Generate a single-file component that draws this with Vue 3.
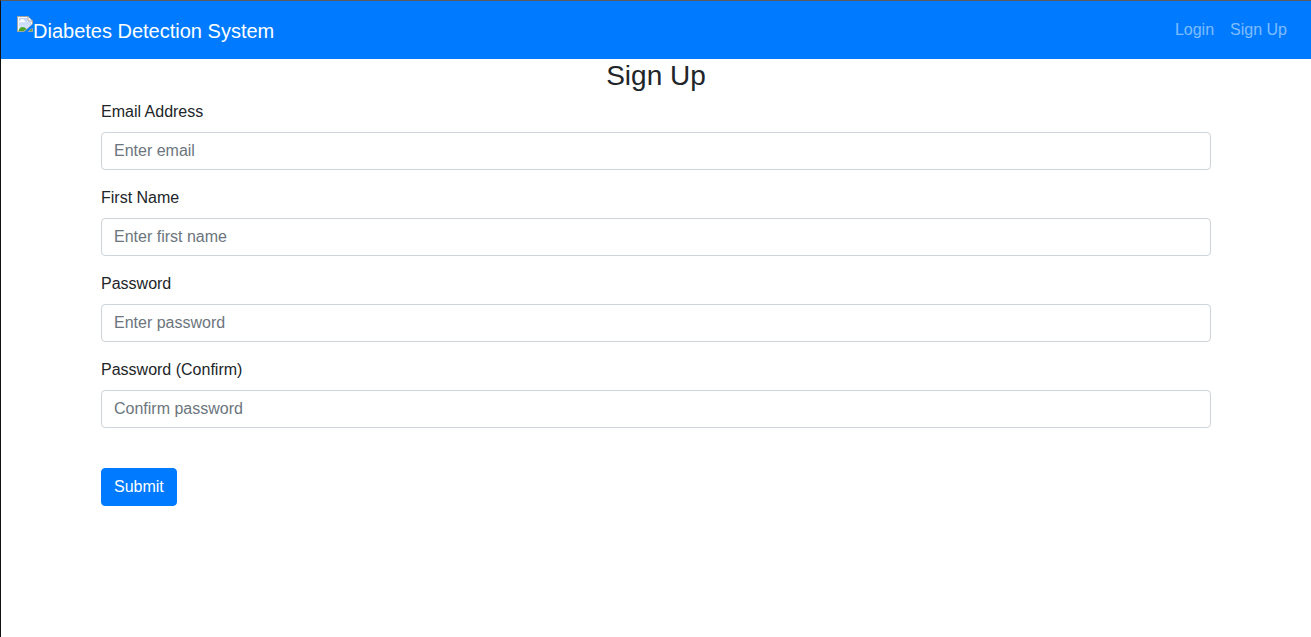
<script setup>
import { reactive } from 'vue'

const fields = [
  { id: 'email', label: 'Email Address', type: 'email', placeholder: 'Enter email' },
  { id: 'firstName', label: 'First Name', type: 'text', placeholder: 'Enter first name' },
  { id: 'password1', label: 'Password', type: 'password', placeholder: 'Enter password' },
  { id: 'password2', label: 'Password (Confirm)', type: 'password', placeholder: 'Confirm password' }
]

const form = reactive({ email: '', firstName: '', password1: '', password2: '' })
</script>

<template>
  <div class="page">
    <nav class="navbar">
      <a class="brand" href="#">
        <svg class="brand-icon" width="16" height="16" viewBox="0 0 16 16" aria-hidden="true">
          <defs>
            <linearGradient id="sky" x1="0" y1="0" x2="0" y2="1">
              <stop offset="0" stop-color="#bcd4fa" />
              <stop offset="1" stop-color="#dfe9fb" />
            </linearGradient>
          </defs>
          <path d="M0 0H11L16 5V8L7 16H0Z" fill="#a3a3a3" />
          <path d="M1 1H11L15 5V8L7 15H1Z" fill="#f4f7fc" />
          <path d="M2 2H10V6H14V8.5L7 15H2Z" fill="url(#sky)" />
          <path d="M2 6.200V5.500Q2.200 4.300 3.500 4.400Q4 2.800 5.500 3Q7 3.100 7.200 4.500Q8.500 4.600 8.500 6.200Z" fill="#fff" />
          <path d="M1.500 15Q2.500 11 5.500 11Q8 11 9.500 13L7 15Z" fill="#4fa42e" />
          <path d="M11 1V5H15Z" fill="#fff" />
          <path d="M11 0V5H16" fill="none" stroke="#a3a3a3" stroke-width="1" />
          <path d="M16 12V16H10.500L13.500 13Z" fill="#a3a3a3" />
          <path d="M15 13V15H12.500Z" fill="#55a832" />
        </svg>
        <span>Diabetes Detection System</span>
      </a>
      <div class="nav-links">
        <a class="nav-link" href="#login">Login</a>
        <a class="nav-link" href="#sign-up">Sign Up</a>
      </div>
    </nav>

    <main class="container">
      <form @submit.prevent>
        <h3 class="title">Sign Up</h3>
        <div v-for="field in fields" :key="field.id" class="form-group">
          <label :for="field.id">{{ field.label }}</label>
          <input
            :id="field.id"
            v-model="form[field.id]"
            class="form-control"
            :type="field.type"
            :name="field.id"
            :placeholder="field.placeholder"
          />
        </div>
        <button class="submit" type="submit">Submit</button>
      </form>
    </main>
  </div>
</template>

<style>
body {
  background: #fff;
}
</style>

<style scoped>
.page,
.page * {
  box-sizing: border-box;
}

.page {
  min-height: 100vh;
  border-top: 1px solid #5c5c5c;
  border-left: 1px solid #111;
  color: #212529;
  font-family: "Liberation Sans", Arial, sans-serif;
  font-size: 16px;
  line-height: 24px;
}

.navbar {
  display: flex;
  align-items: center;
  justify-content: space-between;
  padding: 8px 16px;
  background: #007bff;
}

.brand {
  display: flex;
  align-items: flex-start;
  padding: 7px 0 5px;
  color: #fff;
  font-size: 20px;
  line-height: 30px;
  text-decoration: none;
  white-space: nowrap;
}

.brand-icon {
  flex: none;
}

.nav-links {
  display: flex;
}

.nav-link {
  padding: 8px;
  color: rgba(255, 255, 255, 0.5);
  text-decoration: none;
}

.container {
  max-width: 1140px;
  margin: 0 auto;
  padding: 0 15px;
}

.title {
  margin: 0 0 8px;
  font-size: 28px;
  font-weight: 500;
  line-height: 33px;
  text-align: center;
}

.form-group {
  display: flex;
  flex-direction: column;
  align-items: flex-start;
  gap: 8px;
  margin-bottom: 16px;
}

.form-control {
  width: 100%;
  height: 38px;
  padding: 6px 12px;
  border: 1px solid #ced4da;
  border-radius: 4px;
  background: #fff;
  color: #495057;
  font: inherit;
}

.form-control::placeholder {
  color: #6c757d;
  opacity: 1;
}

.submit {
  margin-top: 24px;
  padding: 6px 12px;
  border: 1px solid #007bff;
  border-radius: 4px;
  background: #007bff;
  color: #fff;
  font: inherit;
  cursor: pointer;
}
</style>
